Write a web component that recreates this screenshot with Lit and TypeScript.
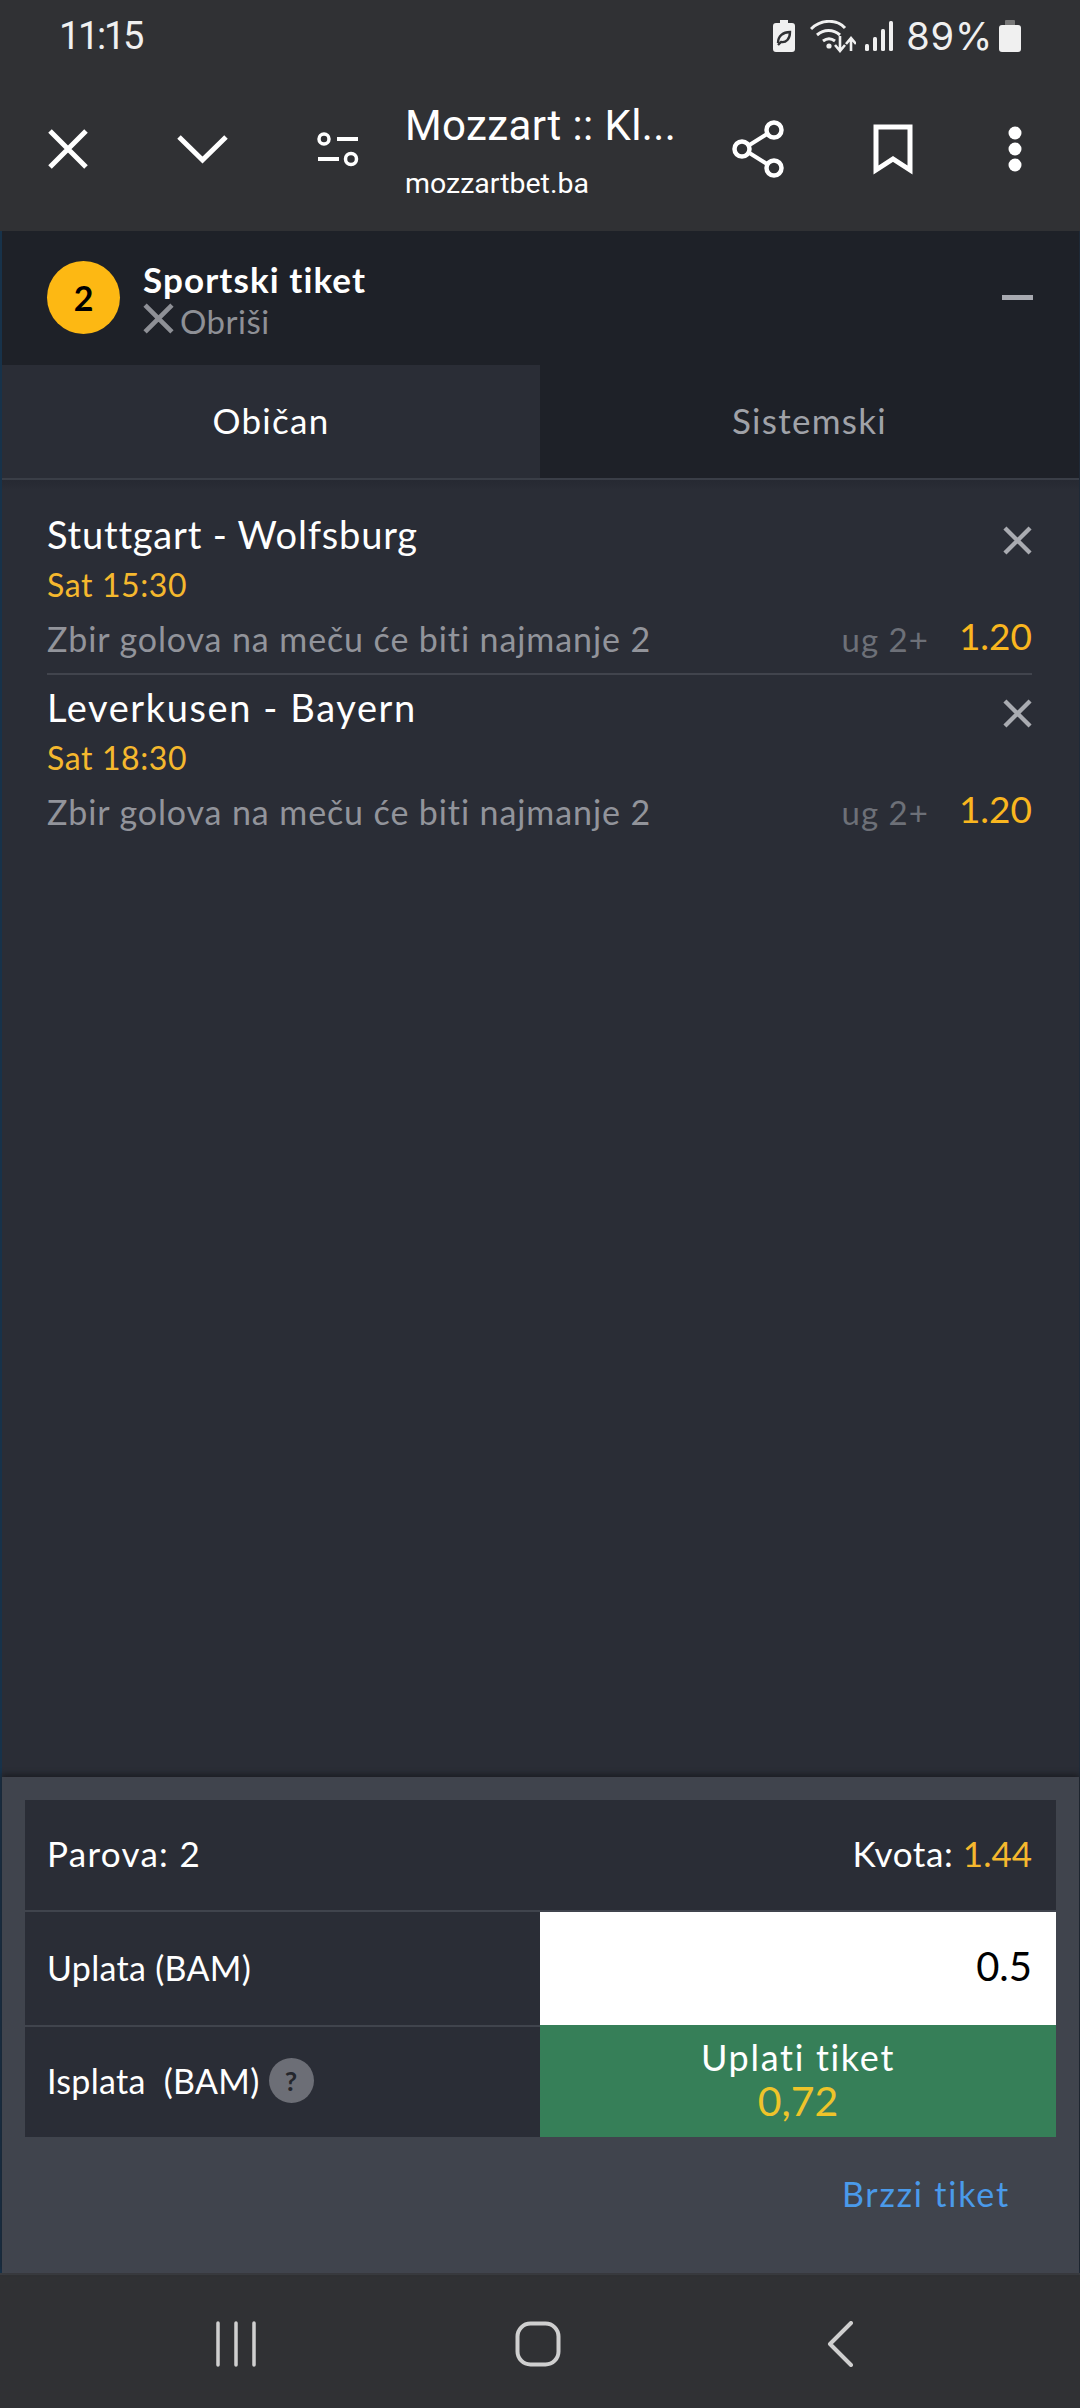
import { LitElement, html, css, svg } from "lit";
import { customElement } from "lit/decorators.js";

const closeIcon = (cls: string) => html`<svg class=${cls} viewBox="0 0 30 30"><path d="M2 2 28 28M28 2 2 28" fill="none" stroke="currentColor" stroke-width="4.5"/></svg>`;

const bets = [
  { match: "Stuttgart - Wolfsburg", time: "Sat 15:30", spacing: 0.8 },
  { match: "Leverkusen - Bayern", time: "Sat 18:30", spacing: 1.6 },
];

@customElement("app-root")
export class AppRoot extends LitElement {
  static styles = css`
    :host { display: flex; flex-direction: column; width: 1080px; height: 2408px; background: #303134; font-family: Lato, "Open Sans", sans-serif; color: #fff; overflow: hidden; }
    * { box-sizing: border-box; }
    svg { display: block; flex: none; }
    .status { height: 72px; flex: none; display: flex; align-items: center; padding: 0 59px 0 59px; font-family: Roboto, sans-serif; color: #f0f0f0; }
    .time { font-size: 38px; letter-spacing: -2.300px; }
    .status-right { margin-left: auto; display: flex; align-items: center; }
    .pct { font-family: Inter, sans-serif; font-size: 38px; letter-spacing: 0.8px; margin: 0 6px 0 13px; }
    .toolbar { height: 159px; flex: none; display: flex; align-items: flex-start; position: relative; color: #fff; }
    .tb-left { display: flex; align-items: center; height: 154px; padding-left: 47px; flex: none; width: 405px; }
    .tb-x { width: 42px; height: 40px; }
    .tb-chev { width: 53px; height: 30px; margin-left: 87px; }
    .tb-filter { width: 42px; height: 36px; margin-left: 88px; }
    .tb-title { width: 281px; flex: none; padding-top: 30px; font-family: Roboto, sans-serif; }
    .tb-t1 { font-size: 42px; line-height: 48px; white-space: nowrap; letter-spacing: 0.4px; }
    .tb-t2 { font-size: 28.500px; line-height: 34px; margin-top: 17px; }
    .tb-right { display: flex; align-items: center; height: 154px; flex: 1; padding-left: 46px; }
    .tb-share { width: 52px; height: 58px; }
    .tb-book { width: 40px; height: 51px; margin-left: 89px; }
    .tb-dots { width: 16px; height: 46px; margin-left: 94px; }
    .main { flex: 1; display: flex; flex-direction: column; border-left: 2px solid #17324a; border-right: 1px solid #1e2a38; background: #2a2d36; min-height: 0; }
    .head { height: 134px; flex: none; background: #1e2128; display: flex; align-items: flex-start; padding: 30px 46px 0 45px; }
    .badge { width: 73px; height: 73px; border-radius: 50%; background: #fdb813; color: #000; font-weight: 700; font-size: 34px; display: flex; align-items: center; justify-content: center; flex: none; }
    .head-text { margin-left: 23px; display: flex; flex-direction: column; margin-top: -2px; }
    .head-title { font-size: 35px; font-weight: 700; line-height: 40px; letter-spacing: 1.100px; }
    .head-del { display: flex; align-items: center; color: #8e9096; font-size: 33px; line-height: 40px; margin-top: 2px; letter-spacing: 0.5px; }
    .del-x { width: 31px; height: 31px; margin-right: 6px; margin-top: -6px; color: #8e9096; }
    .minus { margin-left: auto; width: 31px; height: 5px; background: #a7a9b0; margin-top: 34px; }
    .tabs { flex: none; height: 115px; display: grid; grid-template-columns: 538px 1fr; background: #1e2128; border-bottom: 2px solid #3a3e47; }
    .tab { display: flex; align-items: center; justify-content: center; font-size: 35px; color: #a0a2a8; letter-spacing: 1.300px; padding-bottom: 4px; }
    .tab.on { background: #2a2d36; color: #fff; }
    .list { flex: 1; padding: 22px 47px 0 45px; background: linear-gradient(#262932, #2a2d36 10px); }
    .bet { height: 173px; padding-top: 10px; border-bottom: 2px solid #41444d; }
    .bet:last-child { border-bottom: none; }
    .bet-top { display: flex; justify-content: space-between; align-items: flex-start; }
    .match { font-size: 38px; line-height: 44px; }
    .bet-x { width: 29px; height: 29px; color: #a9abb1; margin-top: 14px; }
    .when { color: #f5b82e; font-size: 32px; line-height: 38px; margin-top: 10px; letter-spacing: 0.6px; }
    .bet-bot { display: flex; align-items: baseline; margin-top: 11px; }
    .desc { color: #92949b; font-size: 34px; line-height: 40px; letter-spacing: 0.9px; }
    .mk { margin-left: auto; color: #6d7078; font-size: 33px; letter-spacing: 1px; }
    .odd { color: #f9b61f; font-size: 37px; margin-left: 30px; position: relative; top: -2px; }
    .foot { flex: none; height: 496px; background: #40444d; box-shadow: 0 -3px 5px #1d1f25; padding: 23px 23px 0 23px; display: flex; flex-direction: column; position: relative; }
    .table { display: grid; grid-template-columns: 515px 1fr; background: #2a2d36; height: 337px; grid-template-rows: 112px 113px 112px; }
    .row1 { grid-column: 1 / 3; display: flex; justify-content: space-between; align-items: center; padding: 0 24px 4px 22px; border-bottom: 2px solid #40444d; font-size: 35px; }
    .row1 > span:first-child { letter-spacing: 1.300px; }
    .kv { letter-spacing: 0.6px; }
    .y { color: #f5b82e; letter-spacing: 0; }
    .lab { display: flex; align-items: center; padding: 0 0 3px 22px; font-size: 34px; letter-spacing: 0.3px; }
    .lab.t { border-top: 2px solid #40444d; }
    .q { width: 45px; height: 45px; border-radius: 50%; background: #6c6e76; color: #24262c; font-size: 27px; font-weight: 700; display: flex; align-items: center; justify-content: center; margin-left: 9px; }
    .input { background: #fff; color: #000; font-size: 40px; display: flex; align-items: center; justify-content: flex-end; padding: 0 24px 5px 0; }
    .pay { background: #367f58; display: flex; flex-direction: column; align-items: center; justify-content: center; font-size: 36px; line-height: 44px; padding-bottom: 5px; letter-spacing: 1.700px; }
    .pay .y { color: #eec42a; font-size: 41px; }
    .quick { align-self: flex-end; margin: 36px 46px 0 0; color: #4a9aea; font-size: 34px; line-height: 42px; letter-spacing: 1.800px; }
    .nav { height: 135px; flex: none; background: #303134; border-top: 2px solid #3a3c40; display: flex; align-items: flex-start; padding-top: 46px; color: #cfcfcf; }
    .nav svg { height: 46px; }
    .n1 { width: 40px; margin-left: 216px; }
    .n2 { width: 46px; margin-left: 259px; }
    .n3 { width: 28px; margin-left: 265px; }
  `;

  render() {
    return html`
      <div class="status">
        <span class="time">11:15</span>
        <div class="status-right">
          <svg width="22" height="32" viewBox="0 0 22 32"><path d="M7 0h8v3h4a3 3 0 0 1 3 3v23a3 3 0 0 1-3 3H3a3 3 0 0 1-3-3V6a3 3 0 0 1 3-3h4z" fill="#f0f0f0"/><path d="M5 23c0-7 5-11 12-11 0 7-4 11-9 10l-3 3" fill="none" stroke="#303134" stroke-width="2.4"/></svg>
          <svg width="46" height="33" viewBox="0 0 46 33" style="margin-left:15px"><path d="M1 9C11-1 27-1 35 8M7 15c7-6 16-6 23 0M13 21c4-3 8-3 12 0" fill="none" stroke="#f0f0f0" stroke-width="3"/><circle cx="19" cy="26" r="2.6" fill="#f0f0f0"/><path d="M30 16v14M25 25l5 6 5-6M41 31V19M36 24l5-6 5 6" fill="none" stroke="#f0f0f0" stroke-width="2.6"/></svg>
          <svg width="28" height="30" viewBox="0 0 28 30" style="margin-left:9px"><rect x="0" y="23" width="4" height="7" rx="1.5" fill="#f0f0f0"/><rect x="8" y="16" width="4" height="14" rx="1.5" fill="#f0f0f0"/><rect x="16" y="8" width="4" height="22" rx="1.5" fill="#f0f0f0"/><rect x="24" y="0" width="4" height="30" rx="1.5" fill="#f0f0f0"/></svg>
          <span class="pct">89%</span>
          <svg width="22" height="32" viewBox="0 0 22 32"><path d="M7 0h8a1 1 0 0 1 1 1v4H6V1a1 1 0 0 1 1-1z" fill="#777"/><path d="M3 5h16a3 3 0 0 1 3 3v21a3 3 0 0 1-3 3H3a3 3 0 0 1-3-3V8a3 3 0 0 1 3-3z" fill="#f0f0f0"/></svg>
        </div>
      </div>
      <div class="toolbar">
        <div class="tb-left">
          <svg class="tb-x" viewBox="0 0 42 40"><path d="M3 2 39 38M39 2 3 38" fill="none" stroke="#fff" stroke-width="5"/></svg>
          <svg class="tb-chev" viewBox="0 0 53 30"><path d="M3 3 26.500 26 50 3" fill="none" stroke="#fff" stroke-width="5"/></svg>
          <svg class="tb-filter" viewBox="0 0 42 36"><circle cx="7" cy="8" r="5" fill="none" stroke="#fff" stroke-width="3.500"/><path d="M20 8h21M1 28h21" stroke="#fff" stroke-width="4" fill="none"/><circle cx="34" cy="28" r="5.500" fill="none" stroke="#fff" stroke-width="3.500"/></svg>
        </div>
        <div class="tb-title"><div class="tb-t1">Mozzart :: Kl...</div><div class="tb-t2">mozzartbet.ba</div></div>
        <div class="tb-right">
          <svg class="tb-share" viewBox="0 0 52 58"><path d="M40 11 11 29 40 47" fill="none" stroke="#fff" stroke-width="4"/><circle cx="42" cy="10" r="7.500" fill="#303134" stroke="#fff" stroke-width="4.500"/><circle cx="10" cy="29" r="7.500" fill="#303134" stroke="#fff" stroke-width="4.500"/><circle cx="42" cy="48" r="7.500" fill="#303134" stroke="#fff" stroke-width="4.500"/></svg>
          <svg class="tb-book" viewBox="0 0 40 51"><path d="M3 3h34v43L20 35 3 46z" fill="none" stroke="#fff" stroke-width="5"/></svg>
          <svg class="tb-dots" viewBox="0 0 16 46"><circle cx="8" cy="7" r="6.500" fill="#fff"/><circle cx="8" cy="23" r="6.500" fill="#fff"/><circle cx="8" cy="39" r="6.500" fill="#fff"/></svg>
        </div>
      </div>
      <div class="main">
        <div class="head">
          <div class="badge">2</div>
          <div class="head-text">
            <div class="head-title">Sportski tiket</div>
            <div class="head-del">${closeIcon("del-x")}Obriši</div>
          </div>
          <div class="minus"></div>
        </div>
        <div class="tabs"><div class="tab on">Običan</div><div class="tab">Sistemski</div></div>
        <div class="list">
          ${bets.map((b) => html`
            <div class="bet">
              <div class="bet-top"><div class="match" style="letter-spacing:${b.spacing}px">${b.match}</div>${closeIcon("bet-x")}</div>
              <div class="when">${b.time}</div>
              <div class="bet-bot"><span class="desc">Zbir golova na meču će biti najmanje 2</span><span class="mk">ug 2+</span><span class="odd">1.20</span></div>
            </div>`)}
        </div>
        <div class="foot">
          <div class="table">
            <div class="row1"><span>Parova: 2</span><span class="kv">Kvota: <span class="y">1.44</span></span></div>
            <div class="lab">Uplata (BAM)</div>
            <div class="input">0.5</div>
            <div class="lab t">Isplata&nbsp; (BAM)<span class="q">?</span></div>
            <div class="pay"><span>Uplati tiket</span><span class="y">0,72</span></div>
          </div>
          <div class="quick">Brzzi tiket</div>
        </div>
      </div>
      <div class="nav">
        <svg class="n1" viewBox="0 0 40 46">${svg`<path d="M2 2v42M20 2v42M38 2v42" stroke="currentColor" stroke-width="3.500" stroke-linecap="round" fill="none"/>`}</svg>
        <svg class="n2" viewBox="0 0 46 46">${svg`<rect x="2.500" y="2.500" width="41" height="41" rx="13" fill="none" stroke="currentColor" stroke-width="4"/>`}</svg>
        <svg class="n3" viewBox="0 0 28 46">${svg`<path d="M25 2 4 23l21 21" stroke="currentColor" stroke-width="4" stroke-linecap="round" stroke-linejoin="round" fill="none"/>`}</svg>
      </div>
    `;
  }
}
